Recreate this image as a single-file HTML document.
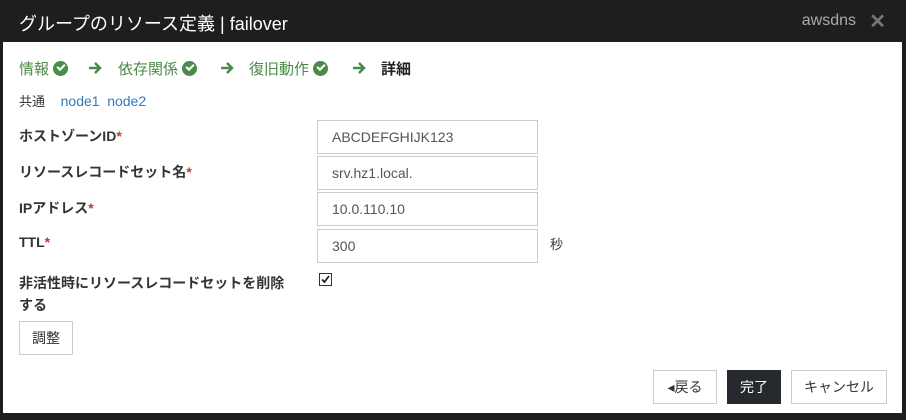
<!DOCTYPE html>
<html><head><meta charset="utf-8"><style>
*{box-sizing:border-box;margin:0;padding:0}
body{width:906px;height:420px;background:#1e1e1e;font-family:"Liberation Sans","Noto Sans CJK JP",sans-serif;font-size:14px;color:#333;position:relative;overflow:hidden}
.hd{position:absolute;left:0;top:0;width:906px;height:42px;background:#1e1e1e;color:#fff}
.title{position:absolute;left:19px;top:10px;font-size:18px}
.rt{position:absolute;right:50px;top:12px;font-size:16px;color:#aaa}
.x{position:absolute;right:20px;top:9px;font-size:20px;color:#777;font-weight:bold}
.body{position:absolute;left:3px;top:42px;width:899px;height:371px;background:#fff}
.a{position:absolute}
.g{color:#4a8a4a;font-size:15px}
.ck{display:inline-block;width:15px;height:15px;border-radius:50%;background:#4a8a4a;vertical-align:-2px;position:relative}
.ck:after{content:"";position:absolute;left:4px;top:3px;width:6px;height:3px;border-left:2px solid #fff;border-bottom:2px solid #fff;transform:rotate(-45deg)}
.lb{font-weight:bold;font-size:14px;color:#333}
.lb i{color:#c0392b;font-style:normal}
.in{position:absolute;left:314px;width:221px;height:34px;border:1px solid #ccc;padding:0 0 0 14px;line-height:32px;color:#555;font-size:14px}
.bt{position:absolute;height:34px;border:1px solid #ccc;background:#fff;text-align:center;line-height:32px;font-size:14px;color:#333}
</style></head><body>
<div class="hd"><div class="title">グループのリソース定義 | failover</div><div class="rt">awsdns</div><div class="x">✕</div></div>
<div class="body">
<div class="a g" style="left:16px;top:16px">情報 <span class="ck"></span></div>
<svg class="a" style="left:85px;top:19px" width="14" height="14" viewBox="0 0 14 14"><path d="M1 7H12M7 2L12 7L7 12" stroke="#4a8a4a" stroke-width="2.5" fill="none"/></svg>
<div class="a g" style="left:115px;top:16px">依存関係 <span class="ck"></span></div>
<svg class="a" style="left:217px;top:19px" width="14" height="14" viewBox="0 0 14 14"><path d="M1 7H12M7 2L12 7L7 12" stroke="#4a8a4a" stroke-width="2.5" fill="none"/></svg>
<div class="a g" style="left:246px;top:16px">復旧動作 <span class="ck"></span></div>
<svg class="a" style="left:349px;top:19px" width="14" height="14" viewBox="0 0 14 14"><path d="M1 7H12M7 2L12 7L7 12" stroke="#4a8a4a" stroke-width="2.5" fill="none"/></svg>
<div class="a" style="left:378px;top:16px;font-weight:bold;font-size:15px;color:#222">詳細</div>
<div class="a" style="left:16px;top:49px;font-size:13px">共通 <span style="color:#337ab7;margin-left:12px;font-size:14px">node1</span> <span style="color:#337ab7;margin-left:4px;font-size:14px">node2</span></div>
<div class="a lb" style="left:16px;top:84px">ホストゾーンID<i>*</i></div>
<div class="in" style="top:78px">ABCDEFGHIJK123</div>
<div class="a lb" style="left:16px;top:120px">リソースレコードセット名<i>*</i></div>
<div class="in" style="top:114px">srv.hz1.local.</div>
<div class="a lb" style="left:16px;top:156px">IPアドレス<i>*</i></div>
<div class="in" style="top:150px">10.0.110.10</div>
<div class="a lb" style="left:16px;top:192px">TTL<i>*</i></div>
<div class="in" style="top:187px">300</div>
<div class="a" style="left:547px;top:192px;font-size:13px">秒</div>
<div class="a lb" style="left:16px;top:230px;line-height:22px">非活性時にリソースレコードセットを削除<br>する</div>
<svg class="a" style="left:316px;top:231px" width="13" height="13" viewBox="0 0 13 13"><rect x="0.5" y="0.5" width="12" height="12" fill="#fff" stroke="#333"/><path d="M3 6.5L5.5 9L10 3" stroke="#222" stroke-width="1.8" fill="none"/></svg>
<div class="bt" style="left:16px;top:279px;width:54px">調整</div>
<div class="bt" style="left:650px;top:328px;width:64px">◂戻る</div>
<div class="bt" style="left:724px;top:328px;width:54px;background:#26292d;border-color:#26292d;color:#fff">完了</div>
<div class="bt" style="left:788px;top:328px;width:96px">キャンセル</div>
</div>
</body></html>
